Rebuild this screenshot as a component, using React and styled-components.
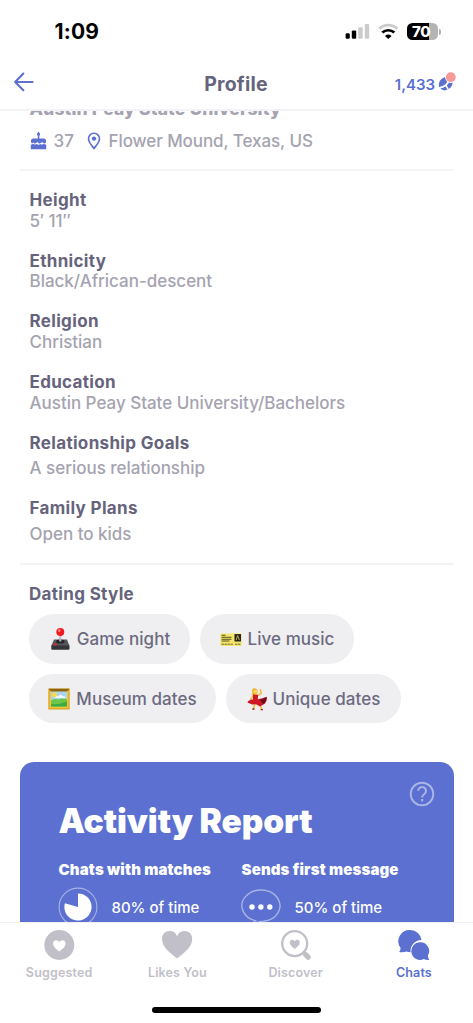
import React from 'react'
import styled, { createGlobalStyle } from 'styled-components'

const fields = [
  { label: 'Height', value: '5′ 11″' },
  { label: 'Ethnicity', value: 'Black/African-descent' },
  { label: 'Religion', value: 'Christian' },
  { label: 'Education', value: 'Austin Peay State University/Bachelors' },
  { label: 'Relationship Goals', value: 'A serious relationship', roomy: true },
  { label: 'Family Plans', value: 'Open to kids', roomy: true },
]

const HEART = 'M12 21.6C5.2 16.4 0.4 12.2 0.4 6.6 0.4 2.9 3 0.6 6.2 0.6 9 0.6 11.2 2 12 4.8 12.8 2 15 0.6 17.8 0.6 21 0.6 23.6 2.9 23.6 6.6 23.6 12.2 18.8 16.4 12 21.6Z'

function Joystick() {
  return (
    <svg width="22" height="24" viewBox="0 0 22 24">
      <path d="M5 12.5h13l2.5 6.5H2.3z" fill="#55565a" />
      <path d="M2.3 18.5h18.2v3.2q0 1-1 1H3.3q-1 0-1-1z" fill="#343539" />
      <ellipse cx="11.3" cy="14.6" rx="4.3" ry="2" fill="#242529" />
      <path d="M10.3 8h2v6.5h-2z" fill="#b9babd" />
      <circle cx="11.3" cy="5" r="4" fill="#ed1c24" />
      <circle cx="10.3" cy="3.6" r="1.3" fill="#ff8b83" />
      <ellipse cx="6" cy="17.5" rx="1.8" ry="1.1" fill="#e3222b" />
    </svg>
  )
}

function Ticket() {
  return (
    <svg width="22" height="24" viewBox="0 0 22 24">
      <rect x="0.5" y="6.5" width="21" height="12.5" fill="#f5e66b" />
      <path d="M1.5 8.2h4M1.5 10.3h10M1.5 12.2h10M1.5 14h8" stroke="#57511f" strokeWidth="1.1" />
      <path d="M1.5 17.2h12M15 17.2h6" stroke="#6f682c" strokeWidth="1" strokeDasharray="2.4 0.6" />
      <rect x="14.5" y="7.1" width="6.5" height="7.4" fill="#25231a" />
      <path d="M16.2 13.1l1.4-4.6 1.8 4.6" stroke="#c9bd5b" strokeWidth="0.9" fill="none" />
    </svg>
  )
}

function Painting() {
  return (
    <svg width="22" height="24" viewBox="0 0 22 24">
      <rect x="0.3" y="1.5" width="21.4" height="21" fill="#dda51f" />
      <rect x="1.6" y="2.8" width="18.8" height="18.4" fill="#f3c63a" />
      <path d="M0.5 1.7h21l-2.7 3H3.2z" fill="#8f6211" />
      <rect x="3" y="4.6" width="16" height="14.8" fill="#a8d5f3" />
      <circle cx="6.4" cy="7.7" r="2.5" fill="#fbd94a" />
      <path d="M7 11q1-3 3-1.6 3-3.4 4.6 0 2.4-1 3 1.6z" fill="#f2fafd" />
      <path d="M3 13.4q4-2.4 7.6-.8 4-1.8 8.4-.4v7.2H3z" fill="#6cc648" />
      <path d="M3 17q7 .8 16-2.6v5H3z" fill="#3eab42" />
    </svg>
  )
}

function Dancer() {
  return (
    <svg width="20" height="24" viewBox="0 0 20 24">
      <path d="M8 15.5l-1.4 6.3M12.4 16l2.2 6.2" stroke="#f2bd3c" strokeWidth="1.7" fill="none" strokeLinecap="round" />
      <path d="M10.600 8.600l3.600-2.200-.8-3.600M6.600 8.600l-3 4" stroke="#f2bd3c" strokeWidth="1.6" fill="none" strokeLinecap="round" />
      <path d="M5 2.600q2.200-2.600 4.800-.4 2 2.400-.4 5.600l-4.800.4q1.200-2.600.4-5.600z" fill="#edb12c" />
      <circle cx="8.4" cy="4.6" r="1.9" fill="#fbd25b" />
      <path d="M6 7.600l5.200.2-.4 4.400q4.600-.4 8.800-2.400.8 4-1.800 7l-4.800 2.600-4-2.200-4 .4-4.600-2.200q.8-2.600 5.600-3z" fill="#cf1825" />
      <path d="M12.800 13q3.400-.8 6.800-3 .4 4-3.200 7z" fill="#6f0d1a" />
      <path d="M5.400 22h2M13.800 22.600h2" stroke="#a11520" strokeWidth="1.4" />
    </svg>
  )
}

const chips = [
  [
    { text: 'Game night', icon: <Joystick />, width: 161 },
    { text: 'Live music', icon: <Ticket />, width: 154 },
  ],
  [
    { text: 'Museum dates', icon: <Painting />, width: 187 },
    { text: 'Unique dates', icon: <Dancer />, width: 175 },
  ],
]

const tabs = [
  {
    name: 'Suggested',
    icon: (
      <svg width="32" height="32" viewBox="0 0 32 32">
        <circle cx="16.3" cy="16" r="15" fill="currentColor" />
        <path d={HEART} transform="translate(9.8 10.9) scale(.54)" fill="#fff" />
      </svg>
    ),
  },
  {
    name: 'Likes You',
    icon: (
      <svg width="32" height="32" viewBox="0 0 32 32">
        <path d={HEART} transform="translate(.5 1.3) scale(1.3)" fill="currentColor" />
      </svg>
    ),
  },
  {
    name: 'Discover',
    icon: (
      <svg width="32" height="32" viewBox="0 0 32 32">
        <circle cx="14.7" cy="14.6" r="12.5" fill="none" stroke="currentColor" strokeWidth="2.4" />
        <path d={HEART} transform="translate(9.6 10.6) scale(.43)" fill="currentColor" />
        <path d="M23.2 23.8l1.6 1.4" stroke="currentColor" strokeWidth="3" />
        <path d="M25.6 25.6l2.6 2.6" stroke="currentColor" strokeWidth="5.2" strokeLinecap="round" />
      </svg>
    ),
  },
  {
    name: 'Chats',
    active: true,
    icon: (
      <svg width="32" height="32" viewBox="0 0 32 32">
        <path d="M12.4 1a11.3 11.3 0 0 1 11.1 10.1A10.7 10.7 0 0 0 12.6 23.3q-2.4 0-4.200-.8-3.400 1.200-7.200.5 1.400-1.200 1.400-4A11.300 11.300 0 0 1 12.400 1z" fill="currentColor" />
        <path d="M22.200 13.300a8.800 8.800 0 0 1 7.700 13.300q0 2.800 1.400 4.300-3 .4-5.500-.8a8.800 8.800 0 1 1-3.600-16.800z" fill="currentColor" />
      </svg>
    ),
  },
]

function App() {
  return (
    <Screen>
      <GlobalStyle />
      <StatusBar>
        <Clock>1:09</Clock>
        <StatusIcons>
          <svg width="25" height="18" viewBox="0 0 25 18">
            <rect x="0.6" y="10.3" width="4.2" height="5.500" rx="1.2" />
            <rect x="6.800" y="7.4" width="4.4" height="8.400" rx="1.2" />
            <rect x="13.300" y="4.3" width="4.4" height="11.500" rx="1.2" fill="#cbcbcb" />
            <rect x="19.800" y="0.9" width="4.4" height="14.900" rx="1.2" fill="#cbcbcb" />
          </svg>
          <svg width="21" height="18" viewBox="0 0 21 18">
            <path d="M1.300 5.700a13.200 13.200 0 0 1 18 0" fill="none" stroke="#cbcbcb" strokeWidth="2.7" />
            <path d="M4.300 9.600a8.800 8.800 0 0 1 12 0" fill="none" stroke="#000" strokeWidth="2.7" />
            <path d="M7 12.900a5 5 0 0 1 6.600 0L10.300 16.100z" />
          </svg>
          <Battery>
            <Level>70</Level>
            <Nub />
          </Battery>
        </StatusIcons>
      </StatusBar>

      <Header>
        <Back aria-label="Back">
          <svg width="20" height="20" viewBox="0 0 20 20" fill="none" stroke="#5b70d0" strokeWidth="2.1" strokeLinecap="round" strokeLinejoin="round">
            <path d="M18.6 10H1.400M9.300 1.600L1.200 10l8.100 8.200" />
          </svg>
        </Back>
        <Title>Profile</Title>
        <Boosts>
          1,433
          <svg width="22" height="22" viewBox="0 0 22 22">
            <path d="M3 16C1.800 10.500 5.800 6 12.400 5.600q.2 5-3.200 7.800-2.400 1.600-6.200 2.600z" fill="#5b70d0" />
            <path d="M4.200 17.600q3.200-1 5.200-2.200l2.200 3.200q-3.800 2-7.400-1zM10.800 14.400q2-1.800 3-4.600l2.600.8q.6 4.800-3.600 7.400z" fill="#5b70d0" />
            <circle cx="14.800" cy="6.2" r="5.7" fill="#fff" />
            <circle cx="14.800" cy="6.2" r="4.9" fill="#f59a98" />
          </svg>
        </Boosts>
      </Header>

      <Content>
        <Summary>
          <School>Austin Peay State University</School>
          <Facts>
            <svg width="17" height="20" viewBox="0 0 17 20">
              <path d="M8.500.4q2 2.200 1.600 3.400-.4 1.200-1.600 1.200T6.900 3.800Q6.500 2.600 8.500.4zM7.800 4.500h1.500V8H7.800z" fill="#5b70d0" />
              <path d="M1 11.300V9.800Q1 7.600 3.200 7.600h10.600Q16 7.600 16 9.800v1.500q-1.300 2.200-3 .4l-.8-.8-1.400 1.200q-1.100.8-2.300-.2l-1.100-1-1.400 1.200q-1.100.8-2.200-.2l-.6-.6Q2.400 13 1 11.300z" fill="#5b70d0" />
              <path d="M.8 13.600q1.200 0 2.200-.9 1.800 1.500 3.600.2.900.8 1.900.8 1.100 0 2-.8 1.800 1.300 3.500-.2 1 .9 2.200.9v4.700H.8z" fill="#5b70d0" />
            </svg>
            <Age>37</Age>
            <svg width="14" height="18" viewBox="0 0 14 18">
              <path d="M7 1.300a5.400 5.400 0 0 0-5.500 5.500C1.500 10.400 4.600 13.200 7 16.400c2.400-3.200 5.500-6 5.500-9.600A5.400 5.400 0 0 0 7 1.300z" fill="none" stroke="#5b70d0" strokeWidth="1.6" />
              <circle cx="7" cy="6.6" r="2.2" fill="#5b70d0" />
            </svg>
            <Place>Flower Mound, Texas, US</Place>
          </Facts>
        </Summary>

        <Details>
          {fields.map((f) => (
            <Field key={f.label} $roomy={f.roomy}>
              <Label>{f.label}</Label>
              <Value>{f.value}</Value>
            </Field>
          ))}
        </Details>

        <Dating>
          <Label>Dating Style</Label>
          {chips.map((row, i) => (
            <ChipRow key={i}>
              {row.map((c) => (
                <Chip key={c.text} $width={c.width}>
                  {c.icon}
                  <span>{c.text}</span>
                </Chip>
              ))}
            </ChipRow>
          ))}
        </Dating>

        <Report>
          <ReportTop>
            <ReportTitle>Activity Report</ReportTitle>
            <Help>
              <svg width="26" height="26" viewBox="0 0 26 26" fill="none" stroke="#aab5e6">
                <circle cx="13" cy="13" r="11.3" strokeWidth="1.9" />
                <path d="M9.200 9.800a3.900 3.900 0 1 1 6.200 3.200q-2.300 1.600-2.300 3.400" strokeWidth="2" />
                <path d="M13.100 18v2.300" strokeWidth="2.3" />
              </svg>
            </Help>
          </ReportTop>
          <Stats>
            <div>
              <StatName>Chats with matches</StatName>
              <Stat>
                <svg width="40" height="40" viewBox="0 0 40 40">
                  <circle cx="20" cy="20" r="18.900" fill="none" stroke="#a8b3e5" strokeWidth="1.1" />
                  <path d="M20 20V6.400A13.600 13.600 0 1 1 6.900 16.300z" fill="#fff" />
                </svg>
                80% of time
              </Stat>
            </div>
            <div>
              <StatName>Sends first message</StatName>
              <Stat>
                <svg width="40" height="40" viewBox="0 0 40 40">
                  <path d="M15.500 34a19 15.700 0 1 1 7 .3q-6.500.3-11 3.300 2.200-1.800 2-4.200" fill="none" stroke="#a8b3e5" strokeWidth="1.4" />
                  <g fill="#fff">
                    <circle cx="11" cy="20" r="2.7" />
                    <circle cx="19.9" cy="20" r="2.7" />
                    <circle cx="28.8" cy="20" r="2.7" />
                  </g>
                </svg>
                50% of time
              </Stat>
            </div>
          </Stats>
        </Report>
      </Content>

      <TabBar>
        {tabs.map((t) => (
          <Tab key={t.name} $active={t.active}>
            {t.icon}
            <span>{t.name}</span>
          </Tab>
        ))}
      </TabBar>
      <HomeBar />
    </Screen>
  )
}

const GlobalStyle = createGlobalStyle`
  body{
    margin: 0;
    background: #fff;
  }
  *{
    box-sizing: border-box;
  }
  svg{
    display: block;
    flex-shrink: 0;
  }
`

const Screen = styled.div`
  width: 473px;
  height: 1023px;
  display: flex;
  flex-direction: column;
  overflow: hidden;
  background: #fff;
  font-family: Inter, "Liberation Sans", sans-serif;
  white-space: nowrap;
`

const StatusBar = styled.div`
  height: 56px;
  flex-shrink: 0;
  display: flex;
  justify-content: space-between;
  padding: 20px 32px 0 54.5px;
`

const Clock = styled.div`
  font-size: 21px;
  line-height: 23px;
  font-weight: 700;
  letter-spacing: 0.2px;
`

const StatusIcons = styled.div`
  display: flex;
  align-items: flex-start;
  gap: 8px;
  padding-top: 3px;
`

const Battery = styled.div`
  display: flex;
  align-items: center;
  gap: 1px;
`

const Level = styled.div`
  width: 31px;
  height: 17px;
  border-radius: 5.5px;
  background: linear-gradient(90deg, #000 70%, #b4b4b4 70%);
  color: #fff;
  font-size: 15px;
  line-height: 17px;
  font-weight: 800;
  letter-spacing: -0.3px;
  padding-left: 5px;
`

const Nub = styled.div`
  width: 2px;
  height: 6px;
  border-radius: 0 2px 2px 0;
  background: #b4b4b4;
`

const Header = styled.header`
  height: 55px;
  flex-shrink: 0;
  display: grid;
  grid-template-columns: 1fr auto 1fr;
  align-items: center;
  padding: 0 15px 0 14px;
  border-bottom: 2px solid #f3f3f5;
`

const Back = styled.button`
  width: 20px;
  padding: 0;
  margin-top: -2px;
  border: 0;
  background: none;
`

const Title = styled.h1`
  margin: 2px 0 0;
  font-size: 19.5px;
  font-weight: 700;
  letter-spacing: 0.2px;
  color: #66647c;
`

const Boosts = styled.div`
  display: flex;
  align-items: center;
  justify-content: flex-end;
  font-size: 15px;
  font-weight: 600;
  color: #5b70d0;
  padding-top: 3px;
  svg{
    margin: -5px 0 0 1px;
  }
`

const Content = styled.main`
  height: 811px;
  flex-shrink: 0;
  overflow: hidden;
  padding: 0 19.5px;
`

const Summary = styled.section`
  height: 60px;
  display: flex;
  flex-direction: column;
  padding: 0 10px;
  border-bottom: 2px solid #f4f4f6;
`

const School = styled.div`
  margin-top: -12.5px;
  font-size: 17.5px;
  line-height: 20px;
  font-weight: 800;
  letter-spacing: 0.15px;
  color: #a5a3b0;
`

const Facts = styled.div`
  display: flex;
  align-items: center;
  height: 20px;
  margin-top: 12px;
  font-size: 17px;
  font-weight: 500;
  color: #a5a3b0;
`

const Age = styled.span`
  width: 40px;
  padding-left: 7px;
`

const Place = styled.span`
  padding-left: 8px;
  letter-spacing: -0.08px;
`

const Details = styled.section`
  height: 393.5px;
  padding: 19.2px 10px 0;
  border-bottom: 2px solid #f4f4f6;
`

const Field = styled.div`
  display: flex;
  flex-direction: column;
  gap: ${(p) => (p.$roomy ? '5px' : '0')};
  margin-bottom: 20px;
`

const Label = styled.div`
  font-size: 17px;
  line-height: 20.6px;
  font-weight: 700;
  letter-spacing: 0.33px;
  color: #66647c;
`

const Value = styled.div`
  font-size: 17px;
  line-height: 20px;
  font-weight: 500;
  letter-spacing: -0.02px;
  color: #a5a3b0;
`

const Dating = styled.section`
  height: 197.5px;
  padding: 19.5px 10px 0 9.5px;
`

const ChipRow = styled.div`
  display: flex;
  gap: 10px;
  margin-top: 9.9px;
`

const Chip = styled.div`
  width: ${(p) => p.$width}px;
  height: 49.5px;
  display: flex;
  align-items: center;
  justify-content: center;
  gap: 6px;
  border-radius: 25px;
  background: #efeff1;
  font-size: 17px;
  font-weight: 500;
  letter-spacing: 0.05px;
  color: #6c6a80;
`

const Report = styled.section`
  height: 240px;
  border-radius: 14px;
  background: #5b70d0;
  color: #fff;
  padding: 19px 18.5px 0 39px;
`

const ReportTop = styled.div`
  display: flex;
  justify-content: space-between;
`

const ReportTitle = styled.h2`
  margin: 20px 0 0;
  font-size: 33.5px;
  line-height: 40px;
  font-weight: 900;
  letter-spacing: -0.1px;
`

const Help = styled.div`
  width: 26px;
`

const Stats = styled.div`
  display: grid;
  grid-template-columns: 183px 1fr;
  padding-top: 18.5px;
`

const StatName = styled.div`
  font-size: 15px;
  line-height: 20px;
  font-weight: 900;
  letter-spacing: 0.15px;
`

const Stat = styled.div`
  display: flex;
  align-items: center;
  gap: 14px;
  margin: 7.5px 0 0 -1px;
  font-size: 15px;
  font-weight: 500;
`

const TabBar = styled.nav`
  height: 80px;
  flex-shrink: 0;
  display: grid;
  grid-template-columns: repeat(4, 118.25px);
  border-top: 1px solid #f1f1f3;
`

const Tab = styled.div`
  display: flex;
  flex-direction: column;
  align-items: center;
  gap: 4px;
  padding-top: 6px;
  font-size: 12.5px;
  line-height: 16px;
  font-weight: 600;
  letter-spacing: 0.15px;
  color: ${(p) => (p.$active ? '#5b70d0' : '#c1c0c9')};
`

const HomeBar = styled.div`
  width: 169px;
  height: 6px;
  flex-shrink: 0;
  margin: 5px auto 0;
  border-radius: 3px;
  background: #000;
`

export default App
